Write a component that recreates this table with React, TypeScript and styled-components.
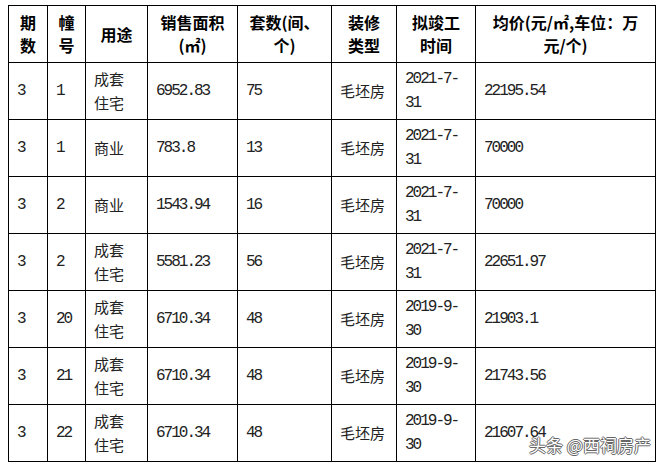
import React from "react";
import styled, { createGlobalStyle } from "styled-components";

const GlobalStyle = createGlobalStyle`
  body {
    margin: 0;
    background: #fff;
  }
`;

type Row = {
  phase: string;
  building: string;
  usage: string[];
  area: string;
  units: string;
  finish: string;
  date: string[];
  price: string;
};

const rows: Row[] = [
  { phase: "3", building: "1", usage: ["成套", "住宅"], area: "6952.83", units: "75", finish: "毛坯房", date: ["2021-7-", "31"], price: "22195.54" },
  { phase: "3", building: "1", usage: ["商业"], area: "783.8", units: "13", finish: "毛坯房", date: ["2021-7-", "31"], price: "70000" },
  { phase: "3", building: "2", usage: ["商业"], area: "1543.94", units: "16", finish: "毛坯房", date: ["2021-7-", "31"], price: "70000" },
  { phase: "3", building: "2", usage: ["成套", "住宅"], area: "5581.23", units: "56", finish: "毛坯房", date: ["2021-7-", "31"], price: "22651.97" },
  { phase: "3", building: "20", usage: ["成套", "住宅"], area: "6710.34", units: "48", finish: "毛坯房", date: ["2019-9-", "30"], price: "21903.1" },
  { phase: "3", building: "21", usage: ["成套", "住宅"], area: "6710.34", units: "48", finish: "毛坯房", date: ["2019-9-", "30"], price: "21743.56" },
  { phase: "3", building: "22", usage: ["成套", "住宅"], area: "6710.34", units: "48", finish: "毛坯房", date: ["2019-9-", "30"], price: "21607.64" },
];

const headers: string[][] = [
  ["期", "数"],
  ["幢", "号"],
  ["用途"],
  ["销售面积", "(㎡)"],
  ["套数(间、", "个)"],
  ["装修", "类型"],
  ["拟竣工", "时间"],
  ["均价(元/㎡,车位：万", "元/个)"],
];

const widths = [39, 38, 62, 90, 94, 65, 79, 180];

const Lines = ({ lines }: { lines: string[] }) => (
  <>
    {lines.map((l, i) => (
      <React.Fragment key={i}>
        {i > 0 && <br />}
        {l}
      </React.Fragment>
    ))}
  </>
);

export default function App() {
  return (
    <Page>
      <GlobalStyle />
      <Table>
        <colgroup>
          {widths.map((w, i) => (
            <col key={i} style={{ width: w }} />
          ))}
        </colgroup>
        <thead>
          <Tr>
            {headers.map((h, i) => (
              <Th key={i}>
                <Lines lines={h} />
              </Th>
            ))}
          </Tr>
        </thead>
        <tbody>
          {rows.map((r, i) => (
            <Tr key={i}>
              <Td $num>{r.phase}</Td>
              <Td $num>{r.building}</Td>
              <Td>
                <Lines lines={r.usage} />
              </Td>
              <Td $num>{r.area}</Td>
              <Td $num>{r.units}</Td>
              <Td>{r.finish}</Td>
              <Td $num>
                <Lines lines={r.date} />
              </Td>
              <Td $num>{r.price}</Td>
            </Tr>
          ))}
        </tbody>
      </Table>
      <Caption>二、项目在售情况</Caption>
      <Watermark>头条 @西祠房产</Watermark>
    </Page>
  );
}

const Page = styled.div`
  position: relative;
  width: 665px;
  height: 469px;
  overflow: hidden;
  padding: 5px 0 0 8px;
  box-sizing: border-box;
  background: #fff;
`;

const Table = styled.table`
  width: 647px;
  table-layout: fixed;
  border-collapse: collapse;
  border: 1px solid #000;
`;

const Tr = styled.tr`
  height: 57px;
`;

const Th = styled.th`
  border: 1px solid #000;
  padding: 0 6px;
  font-family: "Noto Sans CJK SC", sans-serif;
  font-size: 16px;
  font-weight: 700;
  line-height: 23px;
  color: #000;
  text-align: center;
  vertical-align: middle;
`;

const Td = styled.td<{ $num?: boolean }>`
  border: 1px solid #000;
  padding: 0 0 0 8px;
  font-family: ${(p) =>
    p.$num ? `"Liberation Mono", monospace` : `"Noto Sans CJK SC", sans-serif`};
  font-size: ${(p) => (p.$num ? "16px" : "15px")};
  letter-spacing: ${(p) => (p.$num ? "-2px" : "0")};
  line-height: 24px;
  color: #222;
  text-align: left;
  vertical-align: middle;
  white-space: nowrap;
`;

const Caption = styled.div`
  margin-top: 5px;
  padding-left: 72px;
  font-family: "Noto Sans CJK SC", sans-serif;
  font-size: 15px;
  font-weight: 700;
  line-height: 20px;
  color: #222;
`;

const Watermark = styled.div`
  position: absolute;
  left: 529px;
  top: 435px;
  font-family: "Noto Sans CJK SC", sans-serif;
  font-size: 17px;
  line-height: 20px;
  color: #fff;
  text-shadow: 1px 0 0 #666, -1px 0 0 #666, 0 1px 0 #666, 0 -1px 0 #666;
`;
